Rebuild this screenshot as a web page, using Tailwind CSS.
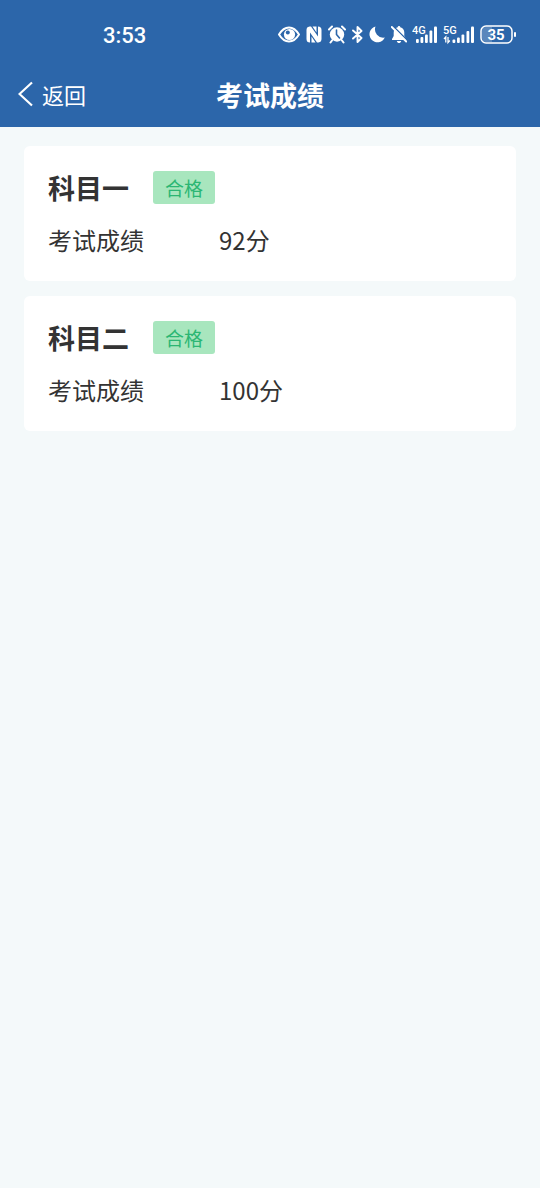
<!DOCTYPE html>
<html lang="zh-CN">
<head>
<meta charset="UTF-8">
<meta name="viewport" content="width=device-width, initial-scale=1">
<title>考试成绩</title>
<script src="https://cdn.jsdelivr.net/npm/@tailwindcss/browser@4"></script>
</head>
<body class="min-h-screen bg-[#f4f9fa] font-['Noto_Sans_CJK_SC',sans-serif] text-[#333333]">
<header class="bg-[#2c66aa] text-white">
  <div class="flex h-16 items-center justify-between pt-1 pr-6 pl-[103px]">
    <time class="pt-1 font-['Roboto','Noto_Sans_CJK_SC',sans-serif] text-[22px] leading-6 font-medium">3:53</time>
    <div class="flex items-center gap-1.5" aria-hidden="true">
      <svg class="h-6 w-[22px]" viewBox="0 0 22 24" fill="none">
        <path d="M1 12.500C4 7.500 7.500 5.500 11 5.500S18 7.500 21 12.500C18 17.500 14.500 19.500 11 19.500S4 17.500 1 12.500Z" stroke="#fff" stroke-width="2"/>
        <circle cx="11.500" cy="12.500" r="5.600" fill="#fff"/>
        <circle cx="9.800" cy="10.500" r="2" fill="#2c66aa"/>
      </svg>
      <svg class="h-6 w-4" viewBox="0 0 16 24" fill="none">
        <path d="M3.500 4.500H5L12 14.500V4.500A3.500 3.500 0 0 1 15.500 8V17A3.500 3.500 0 0 1 12.500 20.500H11L4 10.500V20.500A3.500 3.500 0 0 1 0.500 17V8A3.500 3.500 0 0 1 3.500 4.500Z" fill="#fff"/>
        <path d="M5.500 14.500V20.500H9.500ZM10.500 10.500V4.500H6.500Z" fill="#fff"/>
      </svg>
      <svg class="h-6 w-[18px]" viewBox="0 0 18 24" fill="none">
        <circle cx="9" cy="12.500" r="7.200" fill="#fff"/>
        <path d="M1 7.500L4 4.500M17 7.500L14 4.500M4 18.500L2.500 20.500M14 18.500L15.500 20.500" stroke="#fff" stroke-width="2" stroke-linecap="round"/>
        <path d="M8.500 8V12.500L11.500 16" stroke="#2c66aa" stroke-width="1.600" stroke-linecap="round"/>
      </svg>
      <svg class="h-6 w-[11px]" viewBox="0 0 11 24" fill="none">
        <path d="M1 8.500L9.500 16L5.500 20V5L9.500 9L1 16.500" stroke="#fff" stroke-width="1.900" stroke-linejoin="round" stroke-linecap="round"/>
      </svg>
      <svg class="h-6 w-4" viewBox="0 0 16 24" fill="#fff">
        <path d="M6.500 4.500A8 8 0 1 0 15.800 15.500A8.300 8.300 0 0 1 6.500 4.500Z"/>
      </svg>
      <svg class="h-6 w-4" viewBox="0 0 16 24" fill="none">
        <path d="M8 4C8.800 4 9.300 4.600 9.300 5.300C12 6 13.300 8 13.300 10.500V14L15 17V18H1V17L2.700 14V10.500C2.700 8 4 6 6.700 5.300C6.700 4.600 7.200 4 8 4ZM5.800 19H10.200C9.800 20.400 9 21 8 21S6.200 20.400 5.800 19Z" fill="#fff"/>
        <path d="M1.500 3.500L16 18" stroke="#2c66aa" stroke-width="1.500"/>
        <path d="M0.800 5L15.200 19.500" stroke="#fff" stroke-width="1.900" stroke-linecap="round"/>
      </svg>
      <svg class="-ml-px h-6 w-[25px]" viewBox="0 0 25 24" fill="#fff">
        <text x="0" y="12" font-family="Roboto, sans-serif" font-size="11" font-weight="500">4G</text>
        <rect x="4" y="17" width="2.800" height="4" rx="1"/><rect x="8.500" y="15" width="2.800" height="6" rx="1"/><rect x="13" y="12.500" width="2.800" height="8.500" rx="1"/><rect x="17.500" y="8.500" width="2.800" height="12.500" rx="1"/><rect x="22" y="4.500" width="3" height="16.500" rx="1"/>
      </svg>
      <svg class="h-6 w-[31px]" viewBox="0 0 31 24" fill="#fff">
        <text x="0" y="12" font-family="Roboto, sans-serif" font-size="11" font-weight="500">5G</text>
        <path d="M2.800 20.500V15L1 17M5 15V20.500L6.800 18.500" fill="none" stroke="#fff" stroke-width="1.300"/>
        <rect x="9.500" y="17.500" width="2.800" height="3.500" rx="1"/><rect x="14" y="15.500" width="2.800" height="5.500" rx="1"/><rect x="18.500" y="12.500" width="2.800" height="8.500" rx="1"/><rect x="23.500" y="9" width="2.800" height="12" rx="1"/><rect x="28" y="4.500" width="3" height="16.500" rx="1"/>
      </svg>
      <svg class="h-6 w-9" viewBox="0 0 36 24" fill="#fff">
        <rect x="1" y="4" width="31" height="17" rx="5" fill="none" stroke="#fff" stroke-width="1.500"/>
        <path d="M6 5H12V20H6A4 4 0 0 1 2 16V9A4 4 0 0 1 6 5Z" fill-opacity=".22"/>
        <rect x="34" y="10" width="2" height="5" rx="1"/>
        <text x="16" y="18" text-anchor="middle" font-family="Roboto, sans-serif" font-size="15" font-weight="700">35</text>
      </svg>
    </div>
  </div>
  <div class="grid h-[63px] grid-cols-[1fr_auto_1fr] items-center px-[18px] pb-0.5">
    <button type="button" class="flex items-center gap-2 justify-self-start pb-0.5 text-[22px] leading-8">
      <svg class="h-[26px] w-4" viewBox="0 0 16 26" fill="none" aria-hidden="true"><path d="M14 1.500L1.500 13L14 24.500" stroke="#fff" stroke-width="2.200"/></svg>
      返回
    </button>
    <h1 class="text-[27px] leading-10 font-bold">考试成绩</h1>
  </div>
</header>
<main class="flex flex-col gap-[15px] px-6 pt-[19px]">
  <section class="rounded-md bg-white px-6 pt-[25px] pb-[21px]">
    <div class="flex items-center gap-6">
      <h2 class="text-[27px] leading-8 font-bold">科目一</h2>
      <span class="rounded-[3px] bg-[#a8e6be] px-3 text-[19px] leading-[33px] text-[#2bb673]">合格</span>
    </div>
    <dl class="mt-4 flex text-2xl leading-10">
      <dt class="w-[171px]">考试成绩</dt>
      <dd>92分</dd>
    </dl>
  </section>
  <section class="rounded-md bg-white px-6 pt-[25px] pb-[21px]">
    <div class="flex items-center gap-6">
      <h2 class="text-[27px] leading-8 font-bold">科目二</h2>
      <span class="rounded-[3px] bg-[#a8e6be] px-3 text-[19px] leading-[33px] text-[#2bb673]">合格</span>
    </div>
    <dl class="mt-4 flex text-2xl leading-10">
      <dt class="w-[171px]">考试成绩</dt>
      <dd>100分</dd>
    </dl>
  </section>
</main>
</body>
</html>
